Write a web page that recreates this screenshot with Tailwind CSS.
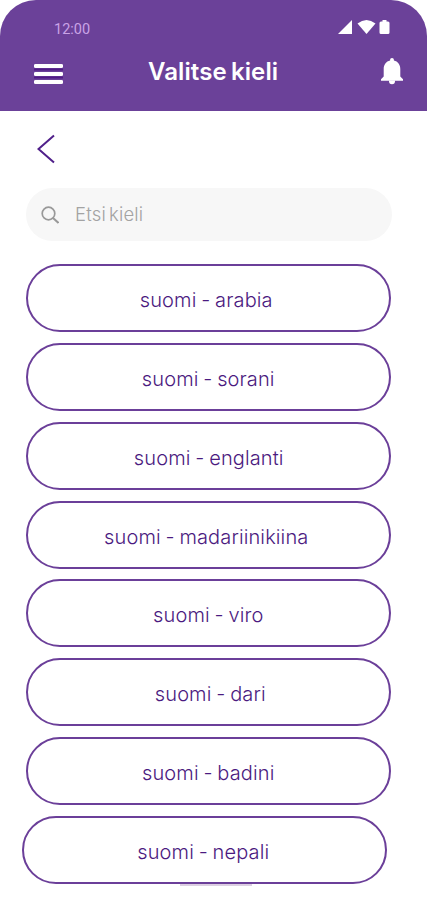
<!DOCTYPE html>
<html lang="fi">
<head>
  <meta charset="UTF-8" />
  <meta name="viewport" content="width=device-width, initial-scale=1.0" />
  <title>Valitse kieli</title>
  <script src="https://cdn.jsdelivr.net/npm/@tailwindcss/browser@4"></script>
</head>
<body class="bg-white h-[900px] overflow-hidden font-['Inter',sans-serif]">
  <header class="h-[111px] bg-[#6b4199] rounded-t-[36px] text-white">
    <!-- Status bar -->
    <div class="flex items-start justify-between pt-5 pl-[54px] pr-[37px]">
      <span class="font-['Roboto',sans-serif] text-[14.5px] leading-[19px] text-[#c9a3e6]">12:00</span>
      <svg class="w-[52px] h-[14px]" viewBox="0 0 52 14" fill="currentColor">
        <path d="M0 14L14 0v14z" />
        <path d="M19.5 3.5Q28.500 -3.500 37.500 3.500L28.500 14z" />
        <path d="M44.500 0h4v1.500h1.500q1.500 0 1.500 1.500v9.500q0 1.500-1.500 1.500h-7q-1.500 0-1.500-1.500V3q0-1.500 1.500-1.500h1.500z" />
      </svg>
    </div>

    <!-- Title bar -->
    <div class="flex items-center h-9 mt-[14px] pl-[34px] pr-[24px]">
      <button class="mt-[6px]" aria-label="Valikko">
        <svg class="block w-[29px] h-[22px]" viewBox="0 0 29 22">
          <path d="M0 6.500h29M0 14.500h29" stroke="#501a85" stroke-width="2" />
          <path d="M1.500 3h26M1.500 11h26M1.500 19h26" stroke="#fff" stroke-width="3.800" stroke-linecap="round" />
        </svg>
      </button>
      <h1 class="ml-[85px] mt-0.5 text-[24px] font-semibold tracking-[0.1px] [word-spacing:-2px] whitespace-nowrap">Valitse kieli</h1>
      <button class="ml-auto" aria-label="Ilmoitukset">
        <svg class="block w-[22px] h-[27px]" viewBox="0 0 22 27" fill="currentColor">
          <path d="M11 0c1.200 0 1.900.8 1.900 2v.6c4 .9 6.400 4.200 6.400 8.400v7.500l2.700 2.800v1.500H0v-1.500l2.700-2.800V11c0-4.200 2.400-7.500 6.400-8.400V2c0-1.200.7-2 1.900-2z" />
          <path d="M8 22.500h6v.8a3 3 0 0 1-6 0z" />
        </svg>
      </button>
    </div>
  </header>

  <main class="pl-[25.500px] pr-9">
    <button class="block pt-[23px] pl-[11.500px]" aria-label="Takaisin">
      <svg class="block w-[19px] h-[30px]" viewBox="0 0 19 30" fill="none" stroke="#50208a" stroke-width="2">
        <path d="M17 1.500L1.500 15L17 28.500" />
      </svg>
    </button>

    <div class="flex items-center h-[53px] mt-[24px] ml-[0.5px] -mr-px pl-[15px] rounded-full bg-[#f7f7f7]">
      <svg class="w-[18px] h-[18px]" viewBox="0 0 18 18" fill="none" stroke="#999" stroke-width="1.700">
        <circle cx="7.500" cy="7.500" r="6.300" />
        <path d="M12 12l5.500 5" stroke-width="2" />
      </svg>
      <span class="ml-[16px] text-[18.500px] font-light text-[#a3a3a3] tracking-[0.2px] [word-spacing:-2.5px]">Etsi kieli</span>
    </div>

    <ul class="mt-[23.300px] flex flex-col gap-[10.800px] text-xl font-light text-[#4b1a80] tracking-[0.12px] [word-spacing:-1px]">
      <li class="h-[68px] border-2 border-[#6b3f99] rounded-full flex items-center justify-center pt-1 pr-1">suomi - arabia</li>
      <li class="h-[68px] border-2 border-[#6b3f99] rounded-full flex items-center justify-center pt-1">suomi - sorani</li>
      <li class="h-[68px] border-2 border-[#6b3f99] rounded-full flex items-center justify-center pt-1 pl-px">suomi - englanti</li>
      <li class="h-[68px] border-2 border-[#6b3f99] rounded-full flex items-center justify-center pt-1 pr-1">suomi - madariinikiina</li>
      <li class="h-[68px] border-2 border-[#6b3f99] rounded-full flex items-center justify-center pt-1">suomi - viro</li>
      <li class="h-[68px] border-2 border-[#6b3f99] rounded-full flex items-center justify-center pt-1 pl-1">suomi - dari</li>
      <li class="h-[68px] border-2 border-[#6b3f99] rounded-full flex items-center justify-center pt-1">suomi - badini</li>
      <li class="h-[68px] border-2 border-[#6b3f99] rounded-full flex items-center justify-center pt-1 pr-0.5 -ml-1 mr-1">suomi - nepali</li>
    </ul>
    <div class="w-[72px] h-[2px] ml-[154.500px] bg-[#dccfe2]"></div>
  </main>
</body>
</html>
